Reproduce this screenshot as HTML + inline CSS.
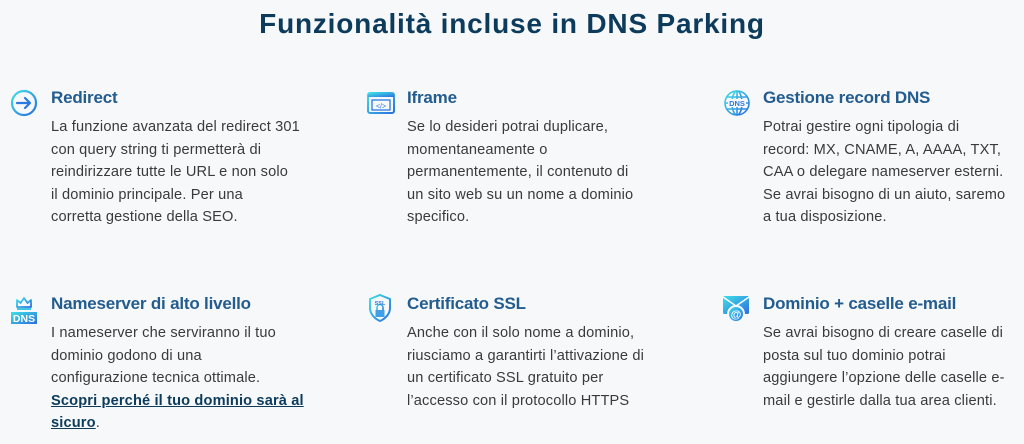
<!DOCTYPE html>
<html><head><meta charset="utf-8"><style>
body{margin:0;width:1024px;height:444px;background:#f7f8fa;font-family:"Liberation Sans",sans-serif;position:relative;overflow:hidden}
h1{position:absolute;top:4px;left:0;width:1024px;text-align:center;margin:0;font-size:28px;font-weight:bold;color:#0c3b5c;letter-spacing:0.8px;line-height:40px}
.b{position:absolute;width:300px;white-space:nowrap}
.b h2{margin:0;font-size:17px;font-weight:bold;color:#235c8e;line-height:22px;letter-spacing:-0.2px}
.b p{margin:7px 0 0;font-size:14.6px;color:#3a3a3a;line-height:22.6px;letter-spacing:0.15px}
.b a{color:#0c3b5c;font-weight:bold;text-decoration:underline}
.i{position:absolute}
</style></head><body>
<h1>Funzionalità incluse in DNS Parking</h1>
<svg width="0" height="0" style="position:absolute"><defs><linearGradient id="g" x1="0" y1="0" x2="1" y2="1"><stop offset="0" stop-color="#3fe0e6"/><stop offset="1" stop-color="#2b6fe0"/></linearGradient></defs></svg>

<svg class="i" style="left:10px;top:89px" width="28" height="28" viewBox="0 0 28 28"><circle cx="14" cy="14" r="12" fill="none" stroke="url(#g)" stroke-width="2.2"/><path d="M7 14h13M15 9l5 5-5 5" fill="none" stroke="#2b7ae0" stroke-width="2.2" stroke-linecap="round" stroke-linejoin="round"/></svg>
<div class="b" style="left:51px;top:87px"><h2>Redirect</h2><p>La funzione avanzata del redirect 301<br>con query string ti permetterà di<br>reindirizzare tutte le URL e non solo<br>il dominio principale. Per una<br>corretta gestione della SEO.</p></div>

<svg class="i" style="left:367px;top:92px" width="28" height="22" viewBox="0 0 28 22"><rect x="1" y="1" width="26" height="20" rx="2" fill="none" stroke="url(#g)" stroke-width="2"/><rect x="1" y="1" width="26" height="4" fill="url(#g)"/><rect x="5" y="8" width="18" height="10" fill="none" stroke="#2b7ae0" stroke-width="1.3"/><text x="14" y="16.5" font-size="7" text-anchor="middle" fill="#2b7ae0" font-family="Liberation Sans">&lt;/&gt;</text></svg>
<div class="b" style="left:407px;top:87px"><h2>Iframe</h2><p>Se lo desideri potrai duplicare,<br>momentaneamente o<br>permanentemente, il contenuto di<br>un sito web su un nome a dominio<br>specifico.</p></div>

<svg class="i" style="left:723px;top:89px" width="28" height="28" viewBox="0 0 28 28" fill="none" stroke="url(#g)" stroke-width="1.6"><circle cx="14" cy="14" r="12"/><ellipse cx="14" cy="14" rx="5" ry="12"/><path d="M2 14h24M4 8h20M4 20h20M14 2v24"/><rect x="5" y="10" width="18" height="8" fill="#f7f8fa" stroke="none"/><text x="14" y="17" font-size="7.5" text-anchor="middle" fill="#2b7ae0" stroke="none" font-weight="bold" font-family="Liberation Sans">DNS</text></svg>
<div class="b" style="left:763px;top:87px"><h2>Gestione record DNS</h2><p>Potrai gestire ogni tipologia di<br>record: MX, CNAME, A, AAAA, TXT,<br>CAA o delegare nameserver esterni.<br>Se avrai bisogno di un aiuto, saremo<br>a tua disposizione.</p></div>

<svg class="i" style="left:10px;top:295px" width="28" height="30" viewBox="0 0 28 30"><path d="M7 12V5l3.5 3L14 3l3.5 5L21 5v7z" fill="none" stroke="url(#g)" stroke-width="1.8" stroke-linejoin="round"/><rect x="7" y="13" width="14" height="2" fill="#3fc8e6"/><rect x="1" y="17" width="26" height="12" fill="url(#g)"/><text x="14" y="27" font-size="10.5" text-anchor="middle" fill="#fff" font-weight="bold" font-family="Liberation Sans">DNS</text></svg>
<div class="b" style="left:51px;top:293px"><h2>Nameserver di alto livello</h2><p>I nameserver che serviranno il tuo<br>dominio godono di una<br>configurazione tecnica ottimale.<br><a>Scopri perché il tuo dominio sarà al<br>sicuro</a>.</p></div>

<svg class="i" style="left:367px;top:293px" width="26" height="30" viewBox="0 0 26 30" fill="none" stroke="url(#g)" stroke-width="2"><path d="M13 2l10 4v9c0 6-5 11-10 13C8 26 3 21 3 15V6z"/><rect x="8.5" y="17" width="9" height="7" fill="#3fa0e6" stroke="none"/><path d="M10 17v-2.5a3 3 0 0 1 6 0V17" stroke-width="1.5"/><text x="13" y="12" font-size="5.5" text-anchor="middle" fill="#2b7ae0" stroke="none" font-weight="bold" font-family="Liberation Sans">SSL</text></svg>
<div class="b" style="left:407px;top:293px"><h2>Certificato SSL</h2><p>Anche con il solo nome a dominio,<br>riusciamo a garantirti l’attivazione di<br>un certificato SSL gratuito per<br>l’accesso con il protocollo HTTPS</p></div>

<svg class="i" style="left:722px;top:295px" width="30" height="28" viewBox="0 0 30 28"><rect x="1" y="1" width="26" height="18" rx="1.5" fill="url(#g)"/><path d="M1 2l13 9 13-9" fill="none" stroke="#fff" stroke-width="1.5"/><circle cx="14" cy="19" r="8" fill="url(#g)" stroke="#f7f8fa" stroke-width="2"/><text x="14" y="23" font-size="11" text-anchor="middle" fill="#fff" font-weight="bold" font-family="Liberation Sans">@</text></svg>
<div class="b" style="left:763px;top:293px"><h2>Dominio + caselle e-mail</h2><p>Se avrai bisogno di creare caselle di<br>posta sul tuo dominio potrai<br>aggiungere l’opzione delle caselle e-<br>mail e gestirle dalla tua area clienti.</p></div>
</body></html>
